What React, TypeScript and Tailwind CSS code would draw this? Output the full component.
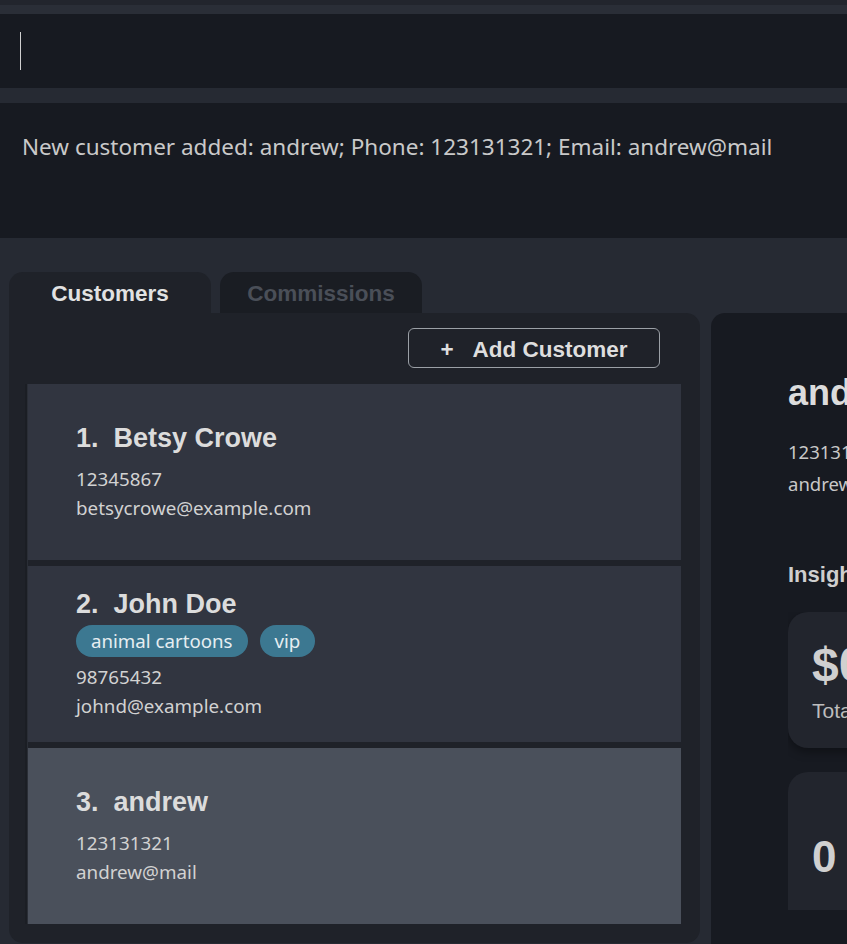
const customers = [
  { name: "Betsy Crowe", phone: "12345867", email: "betsycrowe@example.com", tags: [] as string[] },
  { name: "John Doe", phone: "98765432", email: "johnd@example.com", tags: ["animal cartoons", "vip"] },
  { name: "andrew", phone: "123131321", email: "andrew@mail", tags: [] as string[] },
]

const SELECTED = 2

function CustomerCard({ index, c, selected }: { index: number; c: (typeof customers)[number]; selected: boolean }) {
  return (
    <div
      className={`h-[176px] flex flex-col justify-center pl-[48px] ${selected ? "bg-[#4a505b]" : "bg-[#313540]"}`}
    >
      <div className="pt-[2px] font-['Liberation_Sans',Arial,sans-serif] font-bold text-[27px] leading-[28px] text-[#dcdcdc] whitespace-pre">
        {index + 1}.  {c.name}
      </div>
      {c.tags.length > 0 ? (
        <div className="flex gap-[12px] mt-[7px] mb-[6px]">
          {c.tags.map((t) => (
            <span
              key={t}
              className="h-[32px] px-[15px] rounded-full bg-[#3c7891] text-[#e6eef2] text-[18.7px] leading-[32px]"
            >
              {t}
            </span>
          ))}
        </div>
      ) : (
        <div className="h-[13px]" />
      )}
      <div className="text-[18.8px] leading-[29px] text-[#d2d2d2]">{c.phone}</div>
      <div className="text-[18.8px] leading-[29px] text-[#d2d2d2]">{c.email}</div>
    </div>
  )
}

export default function App() {
  const sel = customers[SELECTED]
  return (
    <div className="w-[847px] h-[944px] overflow-hidden bg-[#262a33] font-['Noto_Sans',sans-serif]">
      <div className="h-[5px] bg-[#22252d]" />
      <div className="h-[9px] bg-[#2a2e37]" />

      {/* command box */}
      <div className="h-[74px] bg-[#171a21] flex items-center pl-[20px]">
        <div className="w-px h-[38px] bg-[#d0d0d0]" />
      </div>

      <div className="h-[15px]" />

      {/* result display */}
      <div className="h-[135px] bg-[#171a21] px-[22px] pt-[29px]">
        <p className="text-[22.5px] leading-[30px] text-[#c9c9c9] whitespace-nowrap">
          New customer added: andrew; Phone: 123131321; Email: andrew@mail
        </p>
      </div>

      <div className="flex pl-[9px] pt-[34px] gap-[11px]">
        {/* left column with tabs */}
        <div className="w-[691px] shrink-0 flex flex-col">
          <div className="flex gap-[9px] h-[41px]">
            <div className="w-[202px] pt-[3px] rounded-t-[14px] bg-[#1f2229] flex items-center justify-center font-['Liberation_Sans',Arial,sans-serif] font-bold text-[22.5px] text-[#e2e2e2]">
              Customers
            </div>
            <div className="w-[202px] pt-[3px] rounded-t-[14px] bg-[#1a1d23] flex items-center justify-center font-['Liberation_Sans',Arial,sans-serif] font-bold text-[22.5px] text-[#4a4f58]">
              Commissions
            </div>
          </div>
          <div className="h-[630px] bg-[#1f2229] rounded-b-[14px] rounded-tr-[14px] pt-[15px]">
            <div className="flex justify-end pr-[40px]">
              <button className="w-[252px] h-[40px] pt-[3px] rounded-[6px] border-[1.5px] border-[#9ba0a6] flex items-center justify-center gap-[19px] font-['Liberation_Sans',Arial,sans-serif] font-bold text-[22.5px] text-[#dedede]">
                <span>+</span>
                <span>Add Customer</span>
              </button>
            </div>
            <div className="mt-[16px] ml-[16px] mr-[19px] flex">
              <div className="w-[2px] bg-[#1b1e24]" />
              <div className="w-px bg-[#2a2e36]" />
              <div className="flex-1 flex flex-col gap-[6px]">
                {customers.map((c, i) => (
                  <CustomerCard key={c.name} index={i} c={c} selected={i === SELECTED} />
                ))}
              </div>
            </div>
          </div>
        </div>

        {/* detail panel */}
        <div className="w-[420px] shrink-0 h-[671px] mt-[41px] bg-[#171a21] rounded-[14px] pl-[77px] pt-[60px]">
          <div className="font-['Liberation_Sans',Arial,sans-serif] font-bold text-[36px] leading-[40px] text-[#dcdcdc]">
            {sel.name}
          </div>
          <div className="mt-[23px] text-[18.5px] leading-[32px] text-[#c8c8c8]">{sel.phone}</div>
          <div className="text-[18.5px] leading-[32px] text-[#c8c8c8]">{sel.email}</div>
          <div className="mt-[63px] font-['Liberation_Sans',Arial,sans-serif] font-bold text-[22px] leading-[24px] text-[#cfcfcf]">
            Insights
          </div>
          <div className="mt-[25px] h-[298px] overflow-hidden flex flex-col gap-[24px]">
            <div className="h-[136px] shrink-0 rounded-[20px] bg-[#22252d] shadow-[0_4px_10px_rgba(0,0,0,0.35)] pl-[24px] pt-[28px] font-['Liberation_Sans',Arial,sans-serif]">
              <div className="font-bold text-[48px] leading-[50px] text-[#d0d0d0]">$0.00</div>
              <div className="mt-[9px] text-[21px] leading-[24px] text-[#bdbdbd]">Total Revenue</div>
            </div>
            <div className="h-[160px] shrink-0 rounded-[20px] bg-[#22252d] pl-[24px] pt-[62px] font-['Liberation_Sans',Arial,sans-serif]">
              <div className="font-bold text-[44px] leading-[46px] text-[#d0d0d0]">0</div>
            </div>
          </div>
        </div>
      </div>
    </div>
  )
}
